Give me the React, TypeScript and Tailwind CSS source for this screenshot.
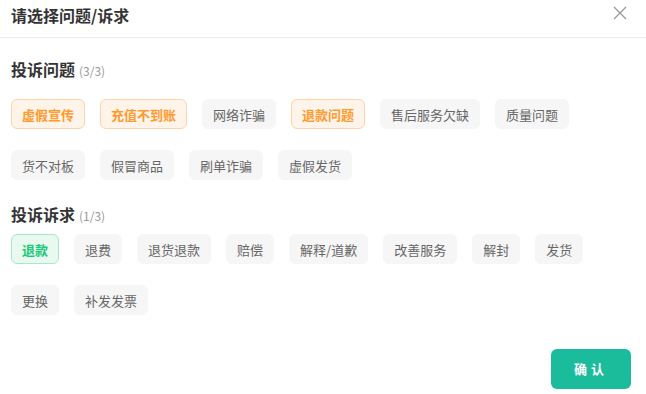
import { useState } from "react";

const FONT = { fontFamily: '"Noto Sans CJK SC", "Noto Sans", sans-serif' };

const problems = ["虚假宣传", "充值不到账", "网络诈骗", "退款问题", "售后服务欠缺", "质量问题", "货不对板", "假冒商品", "刷单诈骗", "虚假发货"];
const demands = ["退款", "退费", "退货退款", "赔偿", "解释/道歉", "改善服务", "解封", "发货", "更换", "补发发票"];

function Chip({ label, active, tone, onClick }: { label: string; active: boolean; tone: "orange" | "green"; onClick: () => void }) {
  const activeCls =
    tone === "orange"
      ? "bg-[#fff4ea] border-[#ffd4ab] text-[#ff9a2e] font-bold"
      : "bg-[#e8f9f0] border-[#a8e8c8] text-[#1dc77b] font-bold";
  return (
    <button
      onClick={onClick}
      className={`h-[30px] px-[10px] rounded-[6px] border text-[13px] leading-none ${
        active ? activeCls : "bg-[#f6f6f6] border-[#f6f6f6] text-[#666]"
      }`}
    >
      {label}
    </button>
  );
}

export default function App() {
  const [picked, setPicked] = useState<string[]>(["虚假宣传", "充值不到账", "退款问题"]);
  const [wants, setWants] = useState<string[]>(["退款"]);

  const toggle = (list: string[], set: (v: string[]) => void, item: string) => {
    if (list.includes(item)) set(list.filter((x) => x !== item));
    else if (list.length < 3) set([...list, item]);
  };

  return (
    <div style={FONT} className="w-[646px] h-[394px] bg-white text-[#333] overflow-hidden">
      {/* Header */}
      <div className="h-[38px] border-b border-[#ebebeb] pl-[11px] pr-[19px] flex items-start justify-between">
        <div className="mt-[3px] text-[16px] leading-6 font-bold text-[#333]">请选择问题/诉求</div>
        <button className="mt-[6px] text-[#999]">
          <svg width="14" height="14" viewBox="0 0 14 14" fill="none" stroke="currentColor" strokeWidth="1.3">
            <path d="M1 1L13 13M13 1L1 13" />
          </svg>
        </button>
      </div>

      <div className="px-[11px]">
        {/* 投诉问题 */}
        <div className="mt-[19px] flex items-baseline gap-[4px]">
          <span className="text-[16px] leading-6 font-bold">投诉问题</span>
          <span className="text-[12px] text-[#999]">({picked.length}/3)</span>
        </div>
        <div className="mt-[18px] w-[624px] flex flex-wrap gap-x-[15px] gap-y-[21px]">
          {problems.map((p) => (
            <Chip key={p} label={p} tone="orange" active={picked.includes(p)} onClick={() => toggle(picked, setPicked, p)} />
          ))}
        </div>

        {/* 投诉诉求 */}
        <div className="mt-[22px] flex items-baseline gap-[4px]">
          <span className="text-[16px] leading-6 font-bold">投诉诉求</span>
          <span className="text-[12px] text-[#999]">({wants.length}/3)</span>
        </div>
        <div className="mt-[8px] w-[624px] flex flex-wrap gap-x-[15px] gap-y-[21px]">
          {demands.map((d) => (
            <Chip key={d} label={d} tone="green" active={wants.includes(d)} onClick={() => toggle(wants, setWants, d)} />
          ))}
        </div>
      </div>

      <div className="mt-[34px] pr-[15px] flex justify-end">
        <button className="w-[80px] h-[40px] rounded-[6px] bg-[#1abc9c] text-white text-[13px] font-bold tracking-[4px]">
          确认
        </button>
      </div>
    </div>
  );
}
